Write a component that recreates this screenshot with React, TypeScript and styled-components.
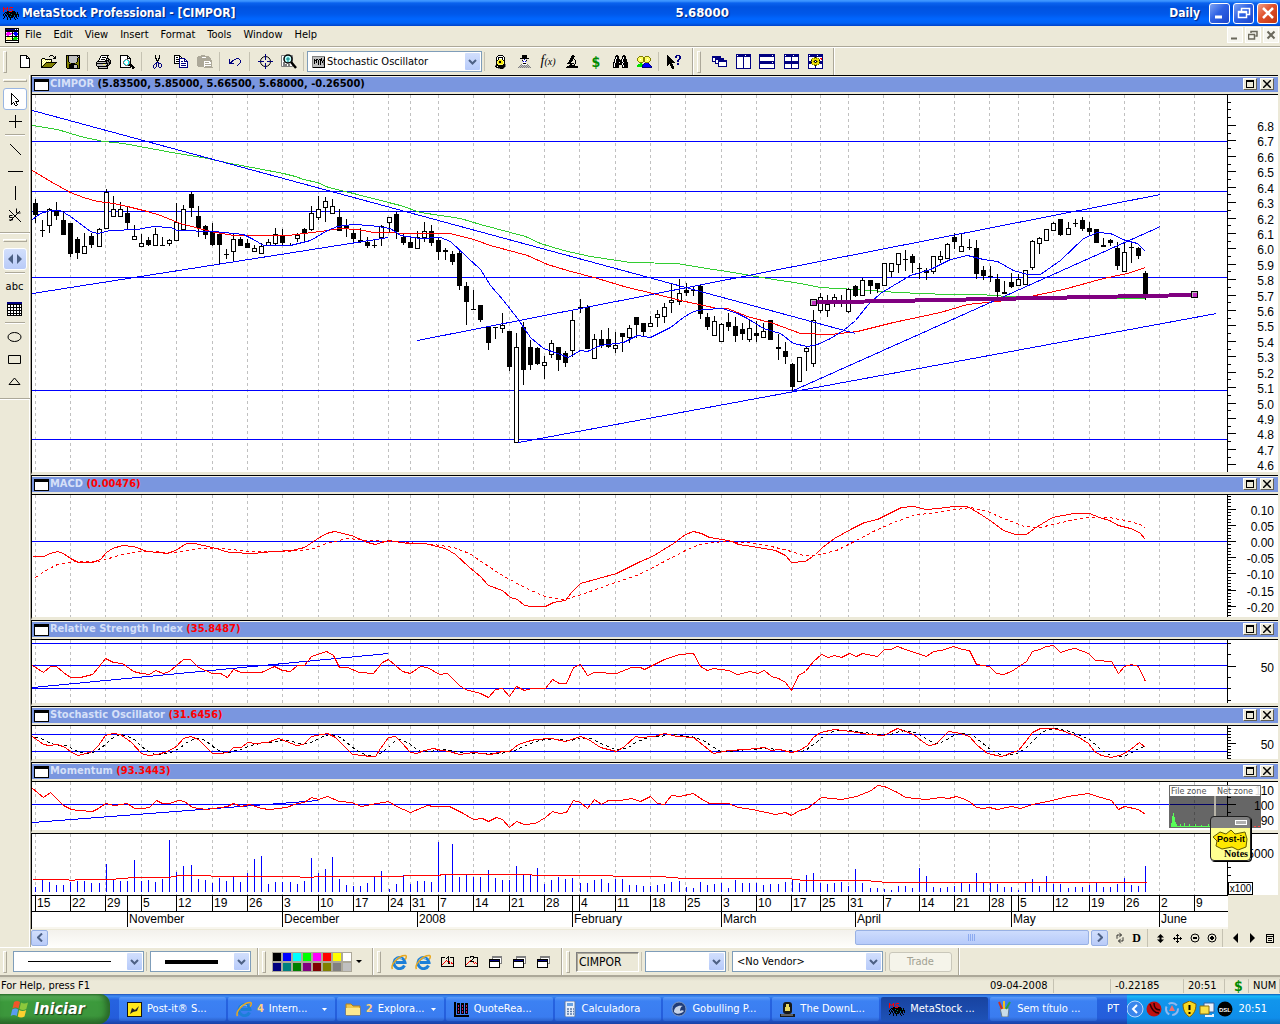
import React from 'react';
import styled, { createGlobalStyle, css } from 'styled-components';

/* ---------- theme values ---------- */
const face = '#ece9d8';
const shade = '#aca899';
const ui = '"DejaVu Sans Condensed", "Noto Sans", sans-serif';
const chartFont = '"Liberation Sans", Arial, sans-serif';

const Global = createGlobalStyle`
  *, *::before, *::after { box-sizing: border-box; }
  body { margin: 0; background: ${face}; font: 11px/14px ${ui}; color: #000; }
  button, select, input { font: inherit; color: inherit; margin: 0; padding: 0; border: 0; background: none; border-radius: 0; }
  svg { display: block; flex: none; }
`;

/* ---------- pixel sprites ---------- */
const palette: Record<string, string> = {
  k: '#000000', w: '#ffffff', b: '#000080', y: '#ffff66', o: '#808000', g: '#808080', s: '#c0c0c0',
  r: '#ff0000', B: '#0000ff', G: '#008000', L: '#00e000', c: '#00ffff', m: '#ff00ff', t: '#008080', d: '#aca899', Y: '#f0e000',
};

function Sprite({ rows }: { rows: string[] }) {
  const width = Math.max(...rows.map((r) => r.length));
  const runs: React.ReactNode[] = [];
  rows.forEach((row, y) => {
    let x = 0;
    while (x < row.length) {
      const ch = row[x];
      let end = x + 1;
      while (end < row.length && row[end] === ch) end += 1;
      if (palette[ch]) runs.push(<rect key={`${x}-${y}`} x={x} y={y} width={end - x} height={1} fill={palette[ch]} />);
      x = end;
    }
  });
  return (
    <svg width={width} height={rows.length} viewBox={`0 0 ${width} ${rows.length}`} shapeRendering="crispEdges" aria-hidden="true">
      {runs}
    </svg>
  );
}

const repeat = (row: string, n: number) => Array.from({ length: n }, () => row);

const art = {
  fresh: ['kkkkkkk...', 'kwwwwwkk..', 'kwwwwwkwk.', 'kwwwwwkkkk', ...repeat('kwwwwwwwwk', 8), 'kkkkkkkkkk'],
  open: ['.........kkk....', '........k...k.k.', '.............kk.', '.kkk........kkk.', 'kywykkkkkkk.....', 'kwywywywywk.....',
    'kywywywywyk.....', 'kwywykkkkkkkkkkk', 'kywykoooooooook.', 'kwykoooooooook..', 'kykoooooooook...', 'kkoooooooook....', 'kkkkkkkkkkk.....'],
  save: ['kkkkkkkkkkkkkk', 'kokssssssssksk', 'kokssssssssskk', ...repeat('kokssssssssкok'.normalize().replace(/[^a-z]/g, 'k'), 4), 'kooksssssskook', 'kooookkkkooook', 'kookkkkkkkkook',
    'kookkkkkssskok', 'kookkkkkssskok', 'kookkkkkssskok', '.kkkkkkkkkkkkk'],
  print: ['.....kkkkkkkk..', '....kwwwwwwk...', '....kwkkkkwk...', '...kwwwwwwkkk..', '...kwkkkkwk.kk.', '..kwwwwwwkkkkgk', '.kkkkkkkkkkgkgk',
    'kssssssssskggkk', 'kkkkkkkkkkkkgkk', 'kssssssyysskgk.', 'kssssssssskkk..', '.kkkkkkkkkkk...', '..kssssssssk...', '..kkkkkkkkkk...'],
  preview: ['kkkkkkkk.......', 'kwwwwwwkk......', 'kwwwwwwkwk.....', 'kwwwwwwkkkk....', 'kwwwwgggwwk....', 'kwwwgcwcgwk....', 'kwwgcwwwcgk....',
    'kwwgwwwwcgk....', 'kwwgcwwwcgk....', 'kwwwgcwcgkkk...', 'kwwwwgggkkkkk..', 'kwwwwwwwwwkkkk.', 'kkkkkkkkkkk.kkk', '............kk.'],
  cut: ['..k...k..', '..k...k..', '..k...k..', '..kk.kk..', '...k.k...', '...kkk...', '....k....', '...bbb...', '..bb.bbb.', '.b.b.b..b', 'b..b.b..b', 'b..b.b..b', 'b.b...bb.', '.b.......'],
  copy: ['kkkkkk.........', 'kwwwwkk........', 'kwkkwkwk.......', 'kwwwwbbbbbb....', 'kwkkkbwwwwbb...', 'kwwwwbwwwwbwb..', 'kwkkkbwbbwbbbb.',
    'kwwwwbwwwwwwwb.', 'kkkkkbwbbbbbwb.', '.....bwwwwwwwb.', '.....bwbbbbbwb.', '.....bwwwwwwwb.', '.....bbbbbbbbb.'],
  paste: ['....dddd.......', '.ddddddddddd...', 'dddddwwwwdddd..', 'dddddddddddddd.', 'dddddddddddddd.', 'ddddddddddddddd', 'dddddddwwwwwwdd', 'dddddddwddddwwd',
    'dddddddwwwwwwwd', 'dddddddwddddddd', 'dddddddwwwwwwwd', '.ddddddwddddddd', '.......ddddddddd'],
  undo: ['.......bbb..', 'b....bb...b.', 'b..bb......b', 'b.bb.......b', 'bbb........b', 'bbbbb.....b.', '.........b..', '........b...'],
  lock: ['....kkkkk...', '...kwwwwwk..', '..kwkkkkkwk.', '..kwkwwwkwk.', '..kwkyyykwk.', '..kkyYYYykk.', '..kyYkkYYyk.', '..kyYkkYYyk.', '..kyYYYYYyk.', '..kkyyyyykkg', '.gkkkkkkkkkg', '.kkwkkkkkkkg', '..kkkkkkkkg.', '....ggkkkg..'],
  man: ['....kkkkk....', '....kkkkk....', '....kkkkk....', '..kkkkkkkkk..', '....swbws....', '....kwwwk....', '....sBwBs....', '.....www.....', '.....kkk.....', '...gwwwwwg...', '..gsgsgsgsg..', '.gsgsgsgsgsg.', 'gsgsgsgsgsgsg'],
  scope: ['......kk....', '.....kkkk...', '.....kkk....', '....kkkk....', '....kkk.k...', '...kkkk..k..', '...kkk...k..', '..kkk....k..', '.kkkkkkk.k..', '....kk..k...', '...kkkkkk...', '.kkkkkkkkkkk', 'kkkkkkkkkkkk'],
  bino: ['...kk.....kk...', '..kkkk...kkkk..', '..kwkk...kwkk..', '..kwkk...kwkk..', '.kwkkkk.kwkkkk.', '.kwkkkkkkwkkkk.', '.kwkkkkkkwkkkk.', 'kkwkkkwkkkwkkkk', 'kwkkkkkkkwkkkkk', 'kwkkkkkkkwkkkkk', 'kwkkkk...kwkkkk', 'kwkkkk...kwkkkk', 'kkkkkk...kkkkkk'],
  people: ['..oooo..oooo...', '.oyyyyooyyyyo..', 'oyyyyyooyyyyyo.', 'oyywyyooyywyyo.', 'oyyyyyooyyyyyo.', '.oyyyyooyyyyo..', '..oooo..oooo...', '...LL..bBBBb...', '.LLLLLbBBBBBb..', 'LLLLLbBBBBBBBb.', 'LLLLLbBBBBBBBBb', '.....bbbbbbbbbb'],
  help: ['k........bbbb..', 'kk......bb..bb.', 'kkk.....bb..bb.', 'kkkk........bb.', 'kkkkk......bb..', 'kkkkkk....bb...', 'kkkkkkk...bb...', 'kkkkkkkk.......', 'kkkkk.....bb...', 'kk.kkk....bb...', 'k..kkk.........', '....kkk........', '....kkk........', '.....kk........'],
  arrow: ['k.......', 'kk......', 'kwk.....', 'kwwk....', 'kwwwk...', 'kwwwwk..', 'kwwwwwk.', 'kwwwwwwk', 'kwwwkkkk', 'kwkwwk..', 'kk.kwk..', 'k..kwwk.', '....kk..'],
  tile: ['bbbbbbbbb......', 'bbbbbbbbb......', 'bwwbbbbbbbbb...', 'bwwbbbbbbbbb...', 'bwwbwwbbbbbbbbb', 'bbbbwwbbbbbbbbb', '...bwwbwwwwwwwb', '...bbbbwwwwwwwb', '......bwwwwwwwb', '......bwwwwwwwb', '......bbbbbbbbb'],
  cols: ['bbbbbbbbbbbbbbb', 'bwbbbbbbbwbbbbb', 'bbbbbbbbbbbbbbb', ...repeat('bwwwwwwbwwwwwwb', 11), 'bbbbbbbbbbbbbbb'],
  rows: ['bbbbbbbbbbbbbbbb', 'bbbbbbbbbbbbbwbb', 'bbbbbbbbbbbbbbbb', ...repeat('bwwwwwwwwwwwwwwb', 4), 'bbbbbbbbbbbbbbbb', 'bbbbbbbbbbbbbwbb', 'bbbbbbbbbbbbbbbb', ...repeat('bwwwwwwwwwwwwwwb', 4), 'bbbbbbbbbbbbbbbb'],
  quad: ['bbbbbbbbbbbbbbb', 'bwbbbbbbbwbbbbb', 'bbbbbbbbbbbbbbb', ...repeat('bwwwwwwbwwwwwwb', 4), 'bbbbbbbbbbbbbbb', 'bbbbbbbbbbbbbbb', 'bbbbbbbbbbbbbbb', ...repeat('bwwwwwwbwwwwwwb', 4), 'bbbbbbbbbbbbbbb'],
  quadGear: ['bbbbbbbbbbbbbbb', 'bwbbbbbbbwbbbbb', 'bbbbbbbbbbbbbbb', 'bwwwwwokowwwwwb', 'bwwwoYoYoYowrrb', 'bwwoYYYYYYYowrb', 'bwwkYYokoYYkwwb', 'bbboYokwkoYobbb', 'bbbkYYokoYYkbbb', 'bbboYYYYYYYobbb', 'bwwwoYoYoYowwwb', 'bwwwwwokowwwwwb', 'bwwwwwwbwwwwwwb', 'bwwwwwwbwwwwwwb', 'bbbbbbbbbbbbbbb'],
  windows: ['...gggggggggg', '...gggggggggg', '...gwwwwwwwwg', 'kkkkkkkkkkkwg', 'kbbbbbbbbbkwg', 'kkkkkkkkkkkwg', 'kwwwwwwwwwkwg', 'kwwwwwwwwwkgg', 'kwwwwwwwwwk..', 'kwwwwwwwwwk..', 'kwwwwwwwwwk..', 'kkkkkkkkkkk..'],
  bug: ['r...r..rrr......', 'rr.rr.r.........', 'r.r.r..rr.......', 'r...r....r......', 'r...kkrrrkkk....', '..kkkkkkkkkkk.k.', '.k.kkktkkkkkktk.', 'k.k.kkkktkkkkkkk', 'k.kk.kkkkkktkk.k', '.k.k.kktkkk.kk.k', '.k..k.kkkk.k.k..', 'k...k..k...k..k.', '....k..k....k...'],
  doc: ['kkkkkkkkkkkkkk', 'kbbbbbbbbbwbwk', 'kkkkkkkkkkkkkk', 'kkkkkkkkkkkkkk', 'kwmmmwwkwBBBwk', 'kmmmmmmkBBBBBk', 'kmmmmmwkwBBBBk', 'kwmmwwwkwwBBwk', 'kkkkkkkkkkkkkk', 'kwyyywwkwLLLwk', 'kyyyyyykLLLLLk', 'kwyyyywkLLLLwk', 'kkkkkkkkkkkkkk', 'kwwwwwwwwwwwwk', 'kkkkkkkkkkkkkk'],
  one: ['.......k.....', 'kkkk..kk.kkkk', 'k....k.k....k', 'k......k....k', 'k....r.k....k', 'k...r.rkr...k', 'k..r...kr.r.k', 'k.r....kk.rrk', 'kr..........k', 'k...........k', 'kkkkkkkkkkkkk'],
  two: ['.....kkkk....', 'kkkk.k..kkkkk', 'k.......k...k', 'k......k....k', 'k....rk.....k', 'k...rkkkk...k', 'k..r....r.r.k', 'k.r......r.rk', 'kr..........k', 'k...........k', 'kkkkkkkkkkkkk'],
  table: ['bbbbbbbbbbbbbbb', 'bbbbbbbbbbbbbbb', 'kkkkkkkkkkkkkkk', 'kwwkwwkwwkwwkwk', 'kwwkwwkwwkwwkwk', 'kkkkkkkkkkkkkkk', 'kwwkwwkwwkwwkwk', 'kwwkwwkwwkwwkwk', 'kkkkkkkkkkkkkkk', 'kwwkwwkwwkwwkwk', 'kwwkwwkwwkwwkwk', 'kkkkkkkkkkkkkkk', 'kwwkwwkwwkwwkwk', 'kkkkkkkkkkkkkkk'],
  hist: ['ggggggggggggg', 'gsssssssssssk', 'gsssssssskssk', 'gskskkskkksgk', 'gskkkskskkskk', 'gskskskskskgk', 'gskskskskskgk', 'gskssskskssgk', 'gssssskskssgk', 'gsssssssssssk', 'gsssssssssssk', 'gkkkkkkkkkkkk'],
};

/* ---------- window chrome ---------- */
const Window = styled.div`
  display: flex;
  flex-direction: column;
  min-width: 1100px;
`;

const TitleBar = styled.header`
  display: flex;
  align-items: center;
  height: 26px;
  padding: 0 2px 0 3px;
  color: #fff;
  font: bold 12px/18px ${ui};
  text-shadow: 1px 1px 1px #00207a;
  background: linear-gradient(#3d95ff 0, #3d95ff 1px, #0a62ee 3px, #0052e0 7px, #0058ea 14px, #0066ff 19px, #0062f6 23px, #0042c8 26px);
`;

const TitleHalf = styled.div`
  display: flex;
  flex: 1 1 0;
  align-items: center;
  gap: 3px;
  white-space: nowrap;
`;

const Price = styled.span`
  flex: 1;
  padding-left: 35px;
  font-size: 13px;
`;

const Period = styled.span`
  padding-right: 6px;
`;

const CaptionButton = styled.button<{ $tone: string }>`
  display: grid;
  place-items: center;
  width: 21px;
  height: 21px;
  border: 1px solid #fff;
  border-radius: 3px;
  background: ${(p) => (p.$tone === 'close' ? 'linear-gradient(135deg, #f0a088, #e0502a 45%, #c03410)' : 'linear-gradient(135deg, #7fa4f4, #2f62e4 45%, #1c46cc)')};
`;

const MenuBar = styled.nav`
  display: flex;
  align-items: center;
  height: 21px;
  padding: 0 1px 2px 5px;
  border-bottom: 1px solid ${shade};
  line-height: 14px;
`;

const MenuItem = styled.button`
  height: 18px;
  padding: 0 6px;
`;

const Spacer = styled.div`
  flex: 1;
`;

const ChildButton = styled.button`
  display: grid;
  place-items: center;
  width: 16px;
  height: 16px;
  margin-left: 2px;
  background: #f6f5ee;
  border: 1px solid #fff;
`;

const ToolBar = styled.div`
  display: flex;
  align-items: center;
  height: 28px;
  padding: 0 0 0 3px;
  border-top: 1px solid #fff;
`;

const Grip = styled.div`
  width: 4px;
  height: 22px;
  margin-right: 6px;
  border: 1px solid;
  border-color: #fff ${shade} ${shade} #fff;
`;

const ToolButton = styled.button<{ $w?: number }>`
  display: grid;
  place-items: center;
  width: ${(p) => p.$w ?? 24}px;
  height: 22px;
`;

const Divider = styled.div<{ $gap?: number }>`
  width: 1px;
  height: 19px;
  margin: 0 ${(p) => (p.$gap ?? 5) - 2}px 0 2px;
  background: #c5c2b2;
`;

const BandEnd = styled.div`
  width: 2px;
  align-self: stretch;
  margin: 0 3px 0 6px;
  border-left: 1px solid ${shade};
  border-right: 1px solid #fff;
`;

const Combo = styled.label<{ $w: number }>`
  position: relative;
  display: flex;
  align-items: center;
  gap: 2px;
  width: ${(p) => p.$w}px;
  height: 21px;
  padding-left: 4px;
  border: 1px solid #7f9db9;
  background: #fff;
`;

const ComboSelect = styled.select<{ $line?: number }>`
  appearance: none;
  flex: 1;
  min-width: 0;
  height: 19px;
  padding-right: 18px;
  outline: none;
  ${(p) =>
    p.$line &&
    css`
      background: linear-gradient(#000, #000) 10px center / calc(100% - 42px) ${p.$line}px no-repeat;
    `}
`;

const ComboArrow = styled.span`
  position: absolute;
  top: 1px;
  right: 1px;
  bottom: 1px;
  display: grid;
  place-items: center;
  width: 15px;
  border-radius: 1px;
  background: linear-gradient(#d2dffc, #b6cafa);
  pointer-events: none;
`;

const Chevron = () => (
  <svg width="9" height="6" viewBox="0 0 9 6" aria-hidden="true">
    <path d="M1 1l3.500 3.500L8 1" fill="none" stroke="#4d6185" strokeWidth="2" />
  </svg>
);

function ComboBox({ label, width, value, line, icon }: { label: string; width: number; value?: string; line?: number; icon?: React.ReactNode }) {
  return (
    <Combo $w={width}>
      {icon}
      <ComboSelect aria-label={label} $line={line} defaultValue={value ?? ''}>
        <option>{value ?? ''}</option>
      </ComboSelect>
      <ComboArrow>
        <Chevron />
      </ComboArrow>
    </Combo>
  );
}

const FuncMark = styled.span`
  font: italic 14px/16px "Liberation Serif", serif;
  small { font-size: 10px; }
`;

const Dollar = styled.span`
  color: #008a00;
  font: bold 14px/14px ${ui};
`;

/* ---------- work area ---------- */
const Work = styled.main`
  display: flex;
`;

const SideBar = styled.aside`
  width: 30px;
  border-right: 1px solid #fff;
  display: flex;
  flex-direction: column;
  align-items: center;
`;

const SideGrip = styled.div`
  width: 24px;
  height: 3px;
  margin: 4px 0 6px;
  border: 1px solid;
  border-color: #fff ${shade} ${shade} #fff;
`;

const SideButton = styled.button<{ $state?: 'on' | 'hot' }>`
  display: grid;
  place-items: center;
  width: 24px;
  height: 22px;
  border-radius: 3px;
  ${(p) => p.$state === 'on' && css`background: #fff; border: 1px solid #98b5e2;`}
  ${(p) => p.$state === 'hot' && css`background: linear-gradient(#d2dffc, #b9cbf8); border: 1px solid #fff;`}
`;

const SideLine = styled.hr<{ $wide?: boolean }>`
  width: ${(p) => (p.$wide ? 30 : 20)}px;
  height: 2px;
  margin: ${(p) => (p.$wide ? '6px 0 1px' : '2px 0')};
  border: 0;
  border-top: 1px solid ${shade};
  border-bottom: 1px solid #fff;
`;

const Charts = styled.section`
  flex: 1;
  min-width: 0;
  border-left: 1px solid ${shade};
  padding-right: 2px;
`;

const Panel = styled.article`
  position: relative;
  border-left: 1px solid #000;
  border-bottom: 3px solid ${face};
`;

const BarePanel = styled.div<{ $ruled?: boolean }>`
  position: relative;
  border-left: 1px solid #000;
  border-top: ${(p) => (p.$ruled ? '1px solid #000' : '0')};
`;

const PanelHead = styled.header`
  display: flex;
  align-items: center;
  height: 20px;
  padding: 0 1px 3px 2px;
  border: solid #000;
  border-width: 1px 0;
  background: linear-gradient(#f4f2e6 0, #f4f2e6 1px, #7a96df 1px, #7a96df 16px, ${face} 16px);
  font: bold 11px/14px ${ui};
`;

const WindowGlyph = styled.span`
  width: 15px;
  height: 12px;
  margin: 3px 1px 0 0;
  border: 1px solid #000;
  border-top-width: 3px;
  background: #fff;
`;

const PanelName = styled.h2<{ $tone: string }>`
  flex: 1;
  margin: 0;
  font: inherit;
  color: #d6e0f8;
  b { color: ${(p) => p.$tone}; }
`;

const PanelButton = styled.button`
  display: grid;
  place-items: center;
  width: 14px;
  height: 12px;
  margin-right: 3px;
  background: ${face};
  border: 1px solid;
  border-color: #fff #605e54 #605e54 #fff;
`;

const Row = styled.div`
  display: flex;
`;

const PlotBox = styled.div`
  flex: 1;
  min-width: 0;
  background: #fff;
`;

const AxisBox = styled.div`
  width: 51px;
  background: #fff;
`;

/* ---------- chart data, in canvas coordinates ---------- */
const LEFT = 32;
const RIGHT = 1227;
const barX = (i: number) => Math.round(34.9 + i * 7.073);

type Mark = [number, string];
const weeks: Mark[] = [
  [35, '15'], [70, '22'], [105, '29'], [141, '5'], [176, '12'], [212, '19'], [247, '26'], [282, '3'], [318, '10'], [353, '17'], [388, '24'], [410, '31'],
  [438, '7'], [473, '14'], [509, '21'], [544, '28'], [579, '4'], [615, '11'], [650, '18'], [685, '25'], [721, '3'], [756, '10'], [791, '17'], [820, '25'],
  [848, '31'], [883, '7'], [919, '14'], [954, '21'], [989, '28'], [1018, '5'], [1053, '12'], [1089, '19'], [1124, '26'], [1159, '2'], [1194, '9'],
];
const monthTicks: Mark[] = [[127, ''], [572, ''], [1011, '']];
const months: Mark[] = [
  [127, 'November'], [282, 'December'], [417, '2008'], [572, 'February'], [721, 'March'], [855, 'April'], [1011, 'May'], [1159, 'June'],
];

/* hollow flag (1 = rising bar), then high, body top, body bottom, low */
const candles = `0 199 203 215 223|0 220 230 230 237|1 208 209 225 233|0 202 210 216 220|0 211 220 235 235|0 223 223 254 257|0 237 239 253 259|1 233 246 253 253|0 233 236 245 248|1 228 229 246 246
|1 189 192 228 228|1 196 209 216 216|1 202 209 216 216|0 206 213 223 230|1 225 236 239 239|1 234 243 246 246|0 237 240 245 246|1 228 234 245 245|0 237 245 245 245|1 239 240 243 246
|1 203 222 240 240|1 205 209 229 229|0 192 194 208 217|0 206 216 228 237|0 225 226 235 239|0 223 232 245 246|0 233 234 245 265|0 249 254 255 259|1 234 239 251 261|0 237 239 246 246
|0 239 243 248 248|1 245 248 251 251|1 243 246 253 253|1 239 242 245 245|1 228 234 243 245|0 229 236 243 246|0 243 245 245 245|1 233 235 238 242|0 228 229 233 242|1 206 213 229 231
|1 196 209 217 220|1 197 201 207 222|1 199 206 213 213|0 209 217 231 231|0 219 225 228 237|0 229 233 239 243|0 228 240 242 243|0 237 242 246 248|0 239 245 246 248|1 225 226 237 246
|1 217 217 222 233|0 212 214 232 239|0 234 237 243 245|0 237 242 248 248|1 231 237 248 248|1 222 231 237 242|0 225 231 243 246|0 238 240 252 260|0 248 250 252 260|0 251 254 262 265
|0 251 253 286 290|0 282 286 302 325|0 290 309 309 309|0 305 305 320 322|0 326 327 343 350|0 327 327 327 339|1 313 325 328 333|0 331 331 367 371|1 333 347 442 442|0 322 327 370 385
|0 340 347 365 370|0 347 348 364 365|1 356 362 365 379|1 340 343 354 358|0 347 347 360 371|0 351 353 363 367|1 310 320 350 357|0 299 307 308 313|0 305 307 349 349|1 334 339 358 358
|0 330 339 345 348|0 328 339 347 348|1 332 345 348 353|0 333 333 337 352|1 325 328 337 343|0 317 317 325 338|0 323 323 332 337|1 316 323 326 327|1 310 314 317 327|1 303 307 316 323
|1 283 300 302 313|1 279 293 301 305|0 283 290 293 296|0 287 290 291 296|0 285 286 314 319|0 313 317 327 330|1 316 321 335 335|1 323 324 341 341|0 313 322 327 331|0 317 326 336 342
|0 323 329 334 340|1 320 328 339 342|0 321 333 336 342|1 323 331 337 337|0 320 320 340 340|0 334 347 349 360|0 342 351 357 364|0 363 364 387 392|1 357 357 381 381|1 347 348 351 371
|1 310 320 363 367|1 293 297 310 313|1 295 304 310 317|1 294 297 302 307|0 295 302 302 307|1 288 289 311 313|0 285 286 296 297|1 278 280 295 295|0 280 280 286 294|0 283 283 289 293
|1 263 263 285 285|1 263 263 271 277|1 253 253 264 273|0 250 259 260 271|0 254 256 263 273|0 263 268 268 279|0 268 270 273 280|1 256 256 271 274|1 251 256 259 263|1 243 244 258 259
|0 233 237 242 249|1 234 246 251 251|0 239 247 247 250|0 240 248 274 279|0 266 270 276 280|0 266 276 276 282|0 274 279 292 298|0 281 292 294 294|0 273 282 287 288|1 274 279 285 286
|1 270 270 284 284|1 240 241 267 270|1 237 238 243 254|1 229 229 240 240|1 222 223 230 231|0 219 219 235 236|1 222 228 234 234|0 219 223 224 227|0 217 220 229 231|0 222 228 232 235
|0 229 229 243 243|0 238 245 247 247|0 239 240 243 246|0 242 248 266 270|1 242 252 271 271|0 242 247 247 263|0 247 248 256 259|0 271 273 295 300`
  .split('|')
  .map((bar) => bar.trim().split(' ').map(Number));

const greenMA = '32,125 57,129 80,136 103,141 123,143 150,148 177,153 207,158 230,163 257,168 283,173 295,176 303,179 317,182 328,187 353,193 388,202 400,205 420,212 440,215 460,218 480,224 510,232 525,236 540,243 563,250 590,256 630,262 677,263 700,267 733,272 767,278 800,283 820,287 855,289 897,292 947,294 980,294 1007,296 1050,298 1114,298 1145,298';
const redMA = '32,170 50,181 70,192 83,197 97,201 113,203 127,206 147,211 160,215 180,223 210,231 233,235 287,235 320,231 340,228 357,229 373,232 420,233 450,233 473,239 490,245 527,255 547,264 567,270 597,278 627,287 653,293 680,300 717,308 727,308 747,316 773,323 800,333 830,334 857,331 893,322 940,312 967,304 997,301 1030,296 1063,289 1103,278 1127,273 1145,267';
const blueMA = '32,219 40,213 50,210 60,210 70,216 90,231 97,233 110,230 137,229 153,226 170,227 177,230 213,231 243,234 253,239 263,245 290,245 310,240 327,230 337,226 353,224 370,225 390,228 400,235 420,238 440,237 450,241 467,257 480,269 490,285 503,300 517,318 530,337 543,348 560,354 568,357 580,350 587,351 600,345 623,342 637,335 650,337 670,327 683,317 693,311 703,309 722,308 737,313 747,318 763,328 780,333 793,343 807,346 817,344 830,338 843,330 855,320 867,305 880,293 893,285 910,275 930,269 950,259 967,255 983,259 997,261 1013,270 1027,274 1040,274 1060,260 1083,238 1097,232 1110,233 1125,240 1137,243 1145,251';
const macd = '32,556 43,556 50,553 57,551 63,553 70,558 78,562 92,562 100,559 106,552 112,548 122,545 133,546 147,551 167,553 175,550 186,543 194,543 212,547 229,552 253,553 273,551 292,550 304,547 316,539 326,533 334,531 351,535 367,542 375,544 388,540 408,543 424,543 445,548 455,554 469,567 480,576 488,585 502,590 510,597 517,599 524,605 531,606 545,606 553,602 565,600 571,592 580,583 616,573 640,561 652,556 673,543 685,534 693,531 701,533 709,537 722,539 732,541 738,544 758,547 775,550 785,555 791,562 805,561 815,554 822,547 834,538 852,528 864,522 877,519 889,513 901,507 913,506 926,509 938,508 954,506 967,506 979,513 991,521 1003,530 1015,534 1026,534 1034,528 1042,523 1052,517 1073,513 1089,513 1099,517 1109,520 1118,525 1130,528 1139,532 1145,539';
const macdSignal = '35,577 47,569 57,564 73,561 98,561 122,554 141,551 175,552 200,548 222,548 249,551 286,551 310,549 326,543 347,538 367,540 392,541 433,544 453,547 469,553 482,562 502,575 526,588 547,597 565,599 584,593 612,583 639,574 664,561 685,550 699,544 722,541 746,542 771,546 791,551 803,555 815,555 836,550 852,542 873,531 893,522 913,515 942,511 970,507 987,511 1003,518 1024,526 1040,527 1056,523 1085,517 1109,517 1130,521 1142,525 1145,528';
const rsi = '32,665 43,672 50,666 56,666 63,672 70,677 80,677 92,674 98,667 105,658 113,662 122,663 133,671 141,673 149,674 155,670 163,673 169,671 176,665 183,659 190,659 198,667 212,673 220,673 227,677 233,669 241,672 261,672 274,666 282,670 290,671 297,665 304,665 311,656 326,651 333,655 339,667 347,667 359,672 373,673 382,662 388,659 402,671 410,673 420,666 427,667 439,674 447,673 459,685 465,689 480,693 488,697 495,689 502,688 509,696 516,686 524,690 531,688 545,688 552,679 559,683 566,683 573,667 580,664 587,675 594,672 616,673 631,667 640,667 644,669 664,659 679,654 693,653 700,666 707,670 713,668 728,670 737,674 750,671 757,673 764,670 771,676 778,678 785,682 791,690 798,675 805,671 813,661 821,654 828,657 834,655 841,657 849,653 856,656 862,653 877,656 884,649 890,649 897,646 905,649 926,656 933,651 941,650 953,646 962,649 969,650 976,664 989,666 996,673 1003,674 1011,671 1026,661 1032,651 1039,649 1046,646 1053,645 1060,652 1069,649 1075,648 1088,653 1095,660 1111,661 1118,673 1124,666 1131,664 1138,666 1145,681';
const stoch = '32,736 43,744 49,745 57,744 65,747 71,752 78,755 92,751 98,745 105,735 112,733 120,734 131,742 141,753 148,755 157,754 167,751 176,746 183,738 190,736 198,739 206,747 212,753 222,753 229,751 233,747 241,747 247,742 255,743 267,742 278,738 286,741 296,745 303,744 311,736 327,733 335,737 345,747 352,754 363,755 369,756 375,756 380,748 388,737 395,736 402,743 410,752 416,753 424,750 433,748 441,750 449,751 459,754 473,752 490,754 502,751 509,751 518,744 527,741 535,739 551,738 565,741 580,736 588,739 600,747 616,751 624,746 635,736 640,737 654,736 664,733 677,736 693,737 703,745 713,753 728,750 746,749 764,747 771,750 779,749 791,752 799,750 807,745 813,737 820,732 834,729 850,731 869,734 884,735 891,731 897,728 905,731 913,734 922,741 928,745 935,744 942,737 948,731 960,733 969,736 977,745 987,753 1001,756 1018,750 1026,740 1032,732 1040,728 1053,728 1064,731 1077,736 1088,743 1094,751 1101,755 1111,757 1122,754 1130,749 1139,742 1145,747';
const momentum = '32,788 43,797 50,792 63,805 71,809 78,810 92,811 98,808 105,803 114,805 127,803 134,808 143,808 149,807 156,800 162,803 169,803 178,800 184,801 192,807 206,809 227,806 233,803 241,806 249,804 261,808 269,809 286,807 297,803 304,802 311,797 318,799 327,796 339,801 351,802 361,806 371,804 388,801 396,806 410,812 427,805 433,806 449,806 461,812 473,819 482,818 488,821 496,817 502,819 509,827 516,821 524,824 535,823 545,817 552,811 559,813 566,812 573,800 580,802 587,808 594,799 601,804 608,800 620,800 631,798 640,801 650,796 657,803 664,804 671,795 679,796 693,793 700,798 709,803 728,803 738,807 752,809 775,814 785,812 791,815 799,810 807,808 821,797 841,799 856,796 871,790 877,785 884,786 897,792 905,797 926,799 940,797 948,798 956,796 962,798 969,801 976,807 983,808 989,807 997,809 1011,806 1020,808 1032,804 1052,800 1067,796 1088,793 1097,796 1111,800 1118,809 1124,806 1138,809 1145,814';
const volumeMA = '32,879 67,879 70,880 80,879 110,879 133,877 167,877 180,875 208,875 213,876 295,876 303,877 310,877 317,876 400,876 407,875 437,875 443,874 520,874 543,875 610,875 615,876 660,876 683,878 788,878 803,880 865,880 887,882 1146,882';
const volume = [
  5, 12, 10, 7, 7, 10, 11, 11, 9, 9, 28, 12, 11, 11, 32, 11, 12, 10, 13, 52, 20, 26, 27, 13, 12, 9, 14, 11, 15, 10, 19, 33, 36, 8, 10, 10, 10, 8, 11, 34, 19, 23, 35, 13, 7, 6, 6, 9, 15, 21, 3, 8, 17, 8, 11, 11, 10,
  50, 17, 48, 15, 18, 15, 15, 22, 14, 12, 12, 26, 18, 17, 24, 8, 12, 15, 13, 14, 9, 9, 12, 13, 9, 13, 13, 7, 7, 6, 6, 7, 8, 10, 11, 5, 4, 10, 7, 8, 9, 4, 12, 9, 9, 9, 7, 8, 8, 10, 12, 9, 17, 19, 9, 8, 9,
  10, 6, 23, 9, 4, 4, 3, 2, 6, 6, 4, 24, 16, 5, 4, 5, 6, 9, 8, 19, 9, 9, 8, 5, 5, 2, 9, 13, 6, 16, 8, 8, 4, 5, 5, 7, 9, 5, 5, 8, 14, 7, 6, 26,
];

/* Three-bar moving average of a polyline, resampled every five units. */
function average(line: string) {
  const pts = line.split(' ').map((p) => p.split(',').map(Number));
  const at = (x: number) => {
    const k = Math.max(1, pts.findIndex((p) => p[0] >= x));
    const [a, b] = [pts[k - 1], pts[k]];
    return a[1] + ((b[1] - a[1]) * (x - a[0])) / (b[0] - a[0]);
  };
  const out: string[] = [];
  for (let x = 35; x <= 1145; x += 5) {
    const mean = [0, 7, 14].reduce((sum, back) => sum + at(Math.max(32, x - back)), 0) / 3;
    out.push(`${x},${Math.round(mean)}`);
  }
  return out.join(' ');
}

const Line = ({ points, color, dash }: { points: string; color: string; dash?: string }) => (
  <polyline points={points} fill="none" stroke={color} strokeDasharray={dash} transform="translate(0.5 0.5)" />
);

const Level = ({ y }: { y: number }) => <rect x={LEFT} y={y} width={RIGHT - LEFT} height={1} fill="#0000ff" />;

function Plot({ top, height, label, children }: { top: number; height: number; label: string; children: React.ReactNode }) {
  return (
    <PlotBox>
      <svg width="100%" height={height} viewBox={`${LEFT} ${top} ${RIGHT - LEFT} ${height}`} preserveAspectRatio="none" shapeRendering="crispEdges" role="img" aria-label={label}>
        {weeks.map(([x]) => (
          <line key={x} x1={x + 0.5} x2={x + 0.5} y1={top} y2={top + height} stroke="#c0c0c0" strokeDasharray="3 3" />
        ))}
        {children}
      </svg>
    </PlotBox>
  );
}

function Axis({ top, height, labels, minor }: { top: number; height: number; labels: [number, string][]; minor: number[] }) {
  return (
    <AxisBox>
      <svg width="51" height={height} viewBox={`1227 ${top} 51 ${height}`} shapeRendering="crispEdges">
        <rect x={1227} y={top} width={1} height={height} fill="#000" />
        {minor.map((y) => (
          <rect key={y} x={1228} y={Math.round(y)} width={3} height={1} fill="#000" />
        ))}
        {labels.map(([y, text]) => (
          <g key={text}>
            <rect x={1228} y={Math.round(y)} width={8} height={1} fill="#000" />
            <text x={1274} y={Math.round(y) + 6} textAnchor="end" fontFamily="Liberation Sans, Arial, sans-serif" fontSize="12">
              {text}
            </text>
          </g>
        ))}
      </svg>
    </AxisBox>
  );
}

function Head({ name, value, tone = '#ff0000' }: { name: string; value: string; tone?: string }) {
  return (
    <PanelHead>
      <WindowGlyph />
      <PanelName $tone={tone}>
        {name} <b>({value})</b>
      </PanelName>
      <PanelButton aria-label={`Maximize ${name}`}>
        <svg width="8" height="8" shapeRendering="crispEdges"><path d="M0 0h8v8H0zM1 2v5h6V2z" fillRule="evenodd" /></svg>
      </PanelButton>
      <PanelButton aria-label={`Close ${name}`}>
        <svg width="8" height="8"><path d="M0 0l8 8M8 0L0 8" stroke="#000" strokeWidth="1.500" /></svg>
      </PanelButton>
    </PanelHead>
  );
}

const series = (from: number, to: number, step: number) => {
  const out: number[] = [];
  for (let v = from; v <= to; v += step) out.push(v);
  return out;
};

const priceLabels: [number, string][] = Array.from({ length: 23 }, (_, k) => [125 + k * 15.42, (6.8 - k * 0.1).toFixed(1)]);
const macdLabels: [number, string][] = ['0.10', '0.05', '0.00', '-0.05', '-0.10', '-0.15', '-0.20'].map((t, k) => [509 + k * 16.1, t]);

const Handle = ({ x, y }: { x: number; y: number }) => (
  <g>
    <rect x={x - 3} y={y - 3} width={7} height={7} fill="#000" />
    <rect x={x - 2} y={y - 2} width={5} height={5} fill="#c0c0c0" />
    <rect x={x - 1} y={y - 1} width={4} height={4} fill="#c030c0" />
  </g>
);

const trend = (x1: number, y1: number, x2: number, y2: number) => <Line points={`${x1},${y1} ${x2},${y2}`} color="#0000ff" />;

function PriceMarks() {
  return (
    <>
      {[141, 191, 211, 277, 390, 439].map((y) => <Level key={y} y={y} />)}
      <Line points={greenMA} color="#32cd32" />
      {candles.map(([hollow, high, top, bottom, low], i) => {
        const x = barX(i);
        return (
          <g key={i}>
            <rect x={x} y={high} width={1} height={Math.max(1, low - high)} fill="#000" />
            <rect x={x - 2} y={top} width={5} height={Math.max(1, bottom - top + (hollow ? 1 : 0))} fill="#000" />
            {hollow === 1 && <rect x={x - 1} y={top + 1} width={3} height={Math.max(1, bottom - top - 1)} fill="#fff" />}
          </g>
        );
      })}
      <Line points={redMA} color="#ff0000" />
      <Line points={blueMA} color="#0000ff" />
      {trend(32, 110, 855, 333)}
      {trend(32, 293, 388, 237)}
      {trend(417, 340, 1160, 194)}
      {trend(518, 442, 1216, 313)}
      {trend(793, 390, 1160, 226)}
      <path d="M814 302.500L1194 295" stroke="#800080" strokeWidth="4" />
      <Handle x={813} y={302} />
      <Handle x={1194} y={294} />
    </>
  );
}

/* ---------- date scale ---------- */
const DateRow = styled.div`
  display: flex;
  height: 16px;
  border-top: 1px solid #000;
  background: #fff;
  font: 12px/15px ${chartFont};
`;

const DateCell = styled.span<{ $span: number; $tick?: boolean }>`
  flex: ${(p) => `${p.$span} ${p.$span} ${p.$span}px`};
  min-width: 0;
  height: 15px;
  padding-left: ${(p) => (p.$tick ? 1 : 0)}px;
  border-left: ${(p) => (p.$tick ? '1px solid #000' : '0')};
  white-space: nowrap;
`;

const DateScale = styled.div`
  flex: 1;
  min-width: 0;
  border-bottom: 2px solid #f8f6ee;
`;

const ScaleGap = styled.div`
  width: 50px;
`;

function Dates({ marks }: { marks: Mark[] }) {
  const sorted = [...marks].sort((a, b) => a[0] - b[0]);
  return (
    <DateRow>
      <DateCell $span={sorted[0][0] - LEFT} />
      {sorted.map(([x, text], k) => (
        <DateCell key={x} $tick $span={(sorted[k + 1]?.[0] ?? RIGHT + 1) - x}>{text}</DateCell>
      ))}
    </DateRow>
  );
}

const Multiplier = styled.span`
  position: absolute;
  right: 25px;
  bottom: 0;
  width: 25px;
  height: 13px;
  border: 1px solid #000;
  background: #fff;
  font: 10px/12px ${chartFont};
  text-align: center;
`;

/* ---------- floating gadgets ---------- */
const Zones = styled.div`
  position: absolute;
  top: 23px;
  right: 17px;
  z-index: 1;
  width: 92px;
  height: 43px;
  padding: 1px 7px 1px 1px;
  display: flex;
  justify-content: space-between;
  border: 1px solid #686868;
  background: linear-gradient(rgba(255, 255, 255, 0.85) 0 10px, rgba(0, 0, 0, 0.6) 10px);
  color: #505050;
  font: 9px/9px "DejaVu Sans Condensed", sans-serif;
  overflow: hidden;
  white-space: nowrap;
`;

const ZoneGraph = styled.svg`
  position: absolute;
  left: 0;
  bottom: 0;
`;

const PostIt = styled.div`
  position: absolute;
  top: 54px;
  right: 27px;
  z-index: 2;
  width: 41px;
  height: 45px;
  border: 1px solid #202020;
  border-radius: 4px;
  background: linear-gradient(#808080 0 11px, #ffff90 11px);
  box-shadow: 1px 1px 0 #000;
  text-align: center;
`;

const PostTab = styled.span`
  position: absolute;
  top: 3px;
  right: 3px;
  width: 12px;
  height: 5px;
  border: 1px solid #fff;
  background: #b0b0b0;
`;

const PostStar = styled.svg`
  position: absolute;
  top: 12px;
  left: 1px;
`;

const PostName = styled.b`
  position: absolute;
  top: 18px;
  left: 6px;
  font: bold 9px/9px "Liberation Sans", sans-serif;
`;

const PostNotes = styled.b`
  position: absolute;
  right: 2px;
  bottom: 0;
  font: bold 10px/12px "Liberation Serif", serif;
`;

/* ---------- scroll row ---------- */
const ScrollRow = styled.div`
  display: flex;
  align-items: center;
  height: 18px;
`;

const Track = styled.div`
  display: flex;
  flex: 1;
  height: 17px;
  background: linear-gradient(#f3f1ec, #fefefb);
`;

const ScrollButton = styled.button`
  display: grid;
  place-items: center;
  width: 17px;
  height: 16px;
  border: 1px solid #98b1e4;
  border-radius: 2px;
  background: linear-gradient(#d2dffc, #b9cbf8);
`;

const TrackFill = styled.div`
  flex: 808 1 0;
`;

const Thumb = styled.div`
  flex: 232 1 0;
  display: grid;
  place-items: center;
  height: 15px;
  margin-right: 2px;
  border: 1px solid #98b1e4;
  border-radius: 2px;
  background: linear-gradient(#cddcfd, #b7cbfa);
`;

const ViewTools = styled.div`
  display: flex;
  align-items: center;
  width: 170px;
  padding-left: 3px;
`;

const ViewButton = styled.button`
  display: grid;
  place-items: center;
  width: 17px;
  height: 16px;
  font: bold 12px/14px "Liberation Serif", serif;
`;

/* ---------- drawing bar ---------- */
const LineBar = styled.div`
  display: flex;
  align-items: center;
  height: 29px;
  padding-left: 3px;
  border-top: 1px solid #fff;
  border-bottom: 1px solid ${shade};
`;

const Swatches = styled.div`
  display: grid;
  grid-template-columns: repeat(8, 10px);
  grid-auto-rows: 10px;
`;

const Swatch = styled.button<{ $c: string }>`
  width: 10px;
  height: 10px;
  border: 1px solid ${shade};
  background: ${(p) => p.$c};
`;

const Symbol = styled.input`
  width: 63px;
  height: 20px;
  padding-left: 2px;
  border: 1px solid;
  border-color: #808080 #fff #fff #808080;
  box-shadow: inset 1px 1px 0 ${shade};
  font: 12px/14px ${ui};
`;

const TradeButton = styled.button`
  width: 63px;
  height: 20px;
  border: 1px solid #c9c7ba;
  border-radius: 3px;
  background: #f5f4ea;
  color: #a1a192;
`;

/* ---------- status bar ---------- */
const StatusBar = styled.footer`
  display: flex;
  align-items: center;
  height: 18px;
  padding-left: 1px;
  border-top: 1px solid ${shade};
  background: linear-gradient(#d8d5c4, ${face} 4px, ${face});
`;

const StatusCell = styled.span<{ $w: number; $mid?: boolean }>`
  display: flex;
  align-items: center;
  justify-content: ${(p) => (p.$mid ? 'center' : 'flex-start')};
  width: ${(p) => p.$w}px;
  height: 14px;
  padding-left: 4px;
  border-right: 1px solid #c5c2b2;
  white-space: nowrap;
`;

/* ---------- task bar ---------- */
const TaskBar = styled.div`
  display: flex;
  height: 30px;
  background: linear-gradient(#1f50b8 0, #3f8cf3 2px, #2663e0 6px, #245ddb 24px, #1941a5);
  color: #fff;
`;

const Start = styled.button`
  display: flex;
  align-items: center;
  gap: 4px;
  width: 110px;
  padding-left: 10px;
  margin-right: 9px;
  border-radius: 0 10px 12px 0;
  background: linear-gradient(#2c7a2c 0, #5eb55e 2px, #3c9a3c 8px, #3c963c 22px, #2a6a2a);
  box-shadow: inset -4px 0 6px #286428;
  color: #fff;
  font: italic bold 16px/24px ${ui};
  text-shadow: 1px 1px 1px #1c3c1c;
`;

const Task = styled.button<{ $active?: boolean }>`
  display: flex;
  align-items: center;
  gap: 5px;
  flex: 107 1 0;
  min-width: 0;
  max-width: 180px;
  height: 24px;
  margin: 3px 2px 0 0;
  padding: 0 8px;
  border-radius: 2px;
  color: #fff;
  white-space: nowrap;
  background: ${(p) => (p.$active ? 'linear-gradient(#1843a0, #1e52b7)' : 'linear-gradient(#5d9bf8, #3c81f3 4px, #3a7cf0 20px, #2c62cc)')};
  i { font-style: normal; font-weight: bold; color: #ffd080; }
  span { flex: 1; text-align: left; }
`;

const Tray = styled.div`
  display: flex;
  align-items: center;
  gap: 2px;
  flex: none;
  width: 153px;
  padding-right: 13px;
  background: linear-gradient(90deg, transparent 7px, rgba(0, 0, 0, 0) 7px), linear-gradient(#0c59b9 0, #18b9f8 2px, #1196ec 6px, #0f8eea 24px, #0d6fc0);
  time { flex: 1; text-align: right; }
`;

const Lang = styled.span`
  width: 28px;
  flex: none;
  padding-left: 8px;
  line-height: 30px;
`;

const Explorer = () => (
  <svg width="16" height="16" viewBox="0 0 16 16" aria-hidden="true">
    <path d="M13.500 11.500A5.500 5.500 0 1114 8.500H5" fill="none" stroke="#1c7fd8" strokeWidth="3" />
    <path d="M4 6.500a4.500 4.500 0 017-1.500" fill="none" stroke="#8fd0ff" />
    <path d="M1.500 15C-1 11 8 1 14.500 1.500c1.500.5.5 3-.5 4" fill="none" stroke="#e8a820" strokeWidth="1.500" />
  </svg>
);

const Flag = () => (
  <svg width="20" height="20" viewBox="0 0 20 20" aria-hidden="true">
    <path d="M4 3c2-1.500 4-1.500 6 0L8.500 9.500c-2-1.400-4-1.400-6 0z" fill="#f0562a" />
    <path d="M11 3.500c2 1.300 4.500 1.300 7 0l-1.700 6.500c-2.200 1.300-4.600 1.300-6.800 0z" fill="#8cc83c" />
    <path d="M2.200 10.500c2-1.500 4-1.500 6 0l-1.500 6.500c-2-1.400-4-1.400-6 0z" fill="#5a9cf0" />
    <path d="M9.200 11c2 1.300 4.500 1.300 7 0l-1.700 6.500c-2.200 1.300-4.600 1.300-6.800 0z" fill="#fcd030" />
  </svg>
);

const taskIcons: Record<string, React.ReactNode> = {
  note: <svg width="15" height="15"><rect width="15" height="15" fill="#111" /><rect x="1" y="1" width="13" height="13" fill="#ffe818" /><path d="M3 12L5 6l3 2 4-4-2 5-4 1z" fill="#222" /></svg>,
  ie: <Explorer />,
  folder: <svg width="16" height="14"><path d="M1 2h5l2 2h7v9H1z" fill="#f0c850" stroke="#b08020" /><path d="M1 6h14v7H1z" fill="#fce890" /></svg>,
  quote: <svg width="15" height="15" shapeRendering="crispEdges"><path d="M0 0h2v13h13v2H0zM3 1h3v11H3zM7 1h3v11H7zM11 1h3v11h-3z" fill="#000" /><path d="M4.500 3v8M8.500 3v8M12.500 3v8" stroke="#c02070" strokeDasharray="2 1" /></svg>,
  calc: <svg width="14" height="16"><rect x="2" width="10" height="16" rx="1" fill="#e8f0fc" stroke="#5878a8" /><path d="M4 2h6v3H4z" fill="#68a0e0" /><path d="M4 8h7M4 10.500h7M4 13h7" stroke="#5878a8" strokeDasharray="2 1" strokeWidth="1.500" /></svg>,
  globe: <svg width="16" height="16"><circle cx="8" cy="8" r="7" fill="#203c78" stroke="#8098c0" /><path d="M3 11c0-5 4-7 9-6-2 0-3 3-3 5 1-1 3-1 4 0-3 3-7 4-10 1z" fill="#c8d4e8" /></svg>,
  down: <svg width="15" height="15"><rect x="3" y="0" width="9" height="12" rx="3" fill="#181818" /><path d="M6 2h3v3h1v4H5V5h1z" fill="#e8d860" /><path d="M0 12h15v3H0z" fill="#181818" /><path d="M1 13h12" stroke="#aaa" /></svg>,
  bug: <Sprite rows={art.bug} />,
  paint: <svg width="14" height="16"><path d="M2 7h9l-1 9H4z" fill="#c8dce8" stroke="#607890" /><path d="M4 8L1 1" stroke="#d03020" strokeWidth="2" /><path d="M6 8V0" stroke="#f0c020" strokeWidth="2" /><path d="M8 8l4-7" stroke="#30a040" strokeWidth="2" /></svg>,
};

const tasks: { icon: string; text: string; count?: number; active?: boolean }[] = [
  { icon: 'note', text: 'Post-it® S...' },
  { icon: 'ie', text: 'Intern...', count: 4 },
  { icon: 'folder', text: 'Explora...', count: 2 },
  { icon: 'quote', text: 'QuoteRea...' },
  { icon: 'calc', text: 'Calculadora' },
  { icon: 'globe', text: 'Gobulling P...' },
  { icon: 'down', text: 'The DownL...' },
  { icon: 'bug', text: 'MetaStock ...', active: true },
  { icon: 'paint', text: 'Sem título ...' },
];

const swatchColors = ['#000', '#00f', '#0ff', '#0f0', '#f0f', '#f00', '#ff0', '#fff', '#000080', '#008080', '#008000', '#800080', '#800000', '#808000', '#808080', '#c0c0c0'];

const Stroke = ({ d, size = 16 }: { d: string; size?: number }) => (
  <svg width={size} height={size} viewBox="0 0 16 16" aria-hidden="true"><path d={d} fill="none" stroke="#000" /></svg>
);

const Tool = ({ name, icon }: { name: string; icon: React.ReactNode }) => <ToolButton aria-label={name}>{icon}</ToolButton>;

const Crosshair = () => (
  <svg width="15" height="15" aria-hidden="true"><circle cx="7.500" cy="7.500" r="5" fill="none" stroke="#000" /><path d="M7.500 0v6M7.500 9v6M0 7.500h6M9 7.500h6" stroke="#000080" /></svg>
);

const ChartSearch = () => (
  <svg width="16" height="15" aria-hidden="true">
    <path d="M0.500 1.500h11v11h-11z" fill="#fff" stroke="#808080" />
    <path d="M3 12V8M5 12v-2M8 12v-2" stroke="#000" />
    <circle cx="7" cy="5" r="4" fill="#c0ffff" stroke="#000" strokeWidth="1.500" />
    <path d="M5 5h4M7 3v5" stroke="#008080" />
    <path d="M10 8l5 6" stroke="#000" strokeWidth="2.500" />
  </svg>
);

export default function App() {
  return (
    <>
      <Global />
      <Window>
        <TitleBar>
          <TitleHalf>
            <Sprite rows={art.bug} />
            <span>MetaStock Professional - [CIMPOR]</span>
          </TitleHalf>
          <TitleHalf>
            <Price>5.68000</Price>
            <Period>Daily</Period>
            <CaptionButton aria-label="Minimize" $tone="min"><svg width="14" height="14"><path d="M2 11h7" stroke="#fff" strokeWidth="3" /></svg></CaptionButton>
            <CaptionButton aria-label="Restore" $tone="max"><svg width="14" height="14"><path d="M4.500 5V2.500h8v6H10M1.500 5.500h8v6h-8zM1.500 6.500h8" fill="none" stroke="#fff" strokeWidth="1.500" /></svg></CaptionButton>
            <CaptionButton aria-label="Close" $tone="close"><svg width="14" height="14"><path d="M2 2l10 10M12 2L2 12" stroke="#fff" strokeWidth="2.500" /></svg></CaptionButton>
          </TitleHalf>
        </TitleBar>

        <MenuBar>
          <Sprite rows={art.doc} />
          {['File', 'Edit', 'View', 'Insert', 'Format', 'Tools', 'Window', 'Help'].map((m) => <MenuItem key={m}>{m}</MenuItem>)}
          <Spacer />
          <ChildButton aria-label="Minimize chart"><svg width="10" height="10"><path d="M1 8.500h6" stroke="#6a685c" strokeWidth="2" /></svg></ChildButton>
          <ChildButton aria-label="Restore chart"><svg width="10" height="10"><path d="M3 3V1.500h6V6H7.500M0.500 4.500h6V9h-6z" fill="none" stroke="#6a685c" strokeWidth="1.500" /></svg></ChildButton>
          <ChildButton aria-label="Close chart"><svg width="10" height="10"><path d="M1.500 1.500l7 7M8.500 1.500l-7 7" stroke="#6a685c" strokeWidth="2" /></svg></ChildButton>
        </MenuBar>

        <ToolBar>
          <Grip />
          <Tool name="New" icon={<Sprite rows={art.fresh} />} />
          <Tool name="Open" icon={<Sprite rows={art.open} />} />
          <Tool name="Save" icon={<Sprite rows={art.save} />} />
          <Divider />
          <Tool name="Print" icon={<Sprite rows={art.print} />} />
          <Tool name="Print preview" icon={<Sprite rows={art.preview} />} />
          <Divider />
          <Tool name="Cut" icon={<Sprite rows={art.cut} />} />
          <Tool name="Copy" icon={<Sprite rows={art.copy} />} />
          <Tool name="Paste" icon={<Sprite rows={art.paste} />} />
          <Divider />
          <Tool name="Undo" icon={<Sprite rows={art.undo} />} />
          <Divider />
          <Tool name="Choose cursor" icon={<Crosshair />} />
          <Tool name="Zoom chart" icon={<ChartSearch />} />
          <Divider />
          <ComboBox label="Indicator" width={175} value="Stochastic Oscillator" icon={<Sprite rows={art.hist} />} />
          <Divider />
          <Tool name="Security" icon={<Sprite rows={art.lock} />} />
          <Tool name="Expert advisor" icon={<Sprite rows={art.man} />} />
          <Tool name="Indicator builder" icon={<FuncMark>f<small>(x)</small></FuncMark>} />
          <Tool name="System tester" icon={<Sprite rows={art.scope} />} />
          <Tool name="Option scope" icon={<Dollar>$</Dollar>} />
          <Tool name="Explorer" icon={<Sprite rows={art.bino} />} />
          <Tool name="Community" icon={<Sprite rows={art.people} />} />
          <Divider />
          <Tool name="Context help" icon={<Sprite rows={art.help} />} />
          <BandEnd />
          <Grip />
          <Tool name="Cascade" icon={<Sprite rows={art.tile} />} />
          <Tool name="Columns" icon={<Sprite rows={art.cols} />} />
          <Tool name="Rows" icon={<Sprite rows={art.rows} />} />
          <Tool name="Tile" icon={<Sprite rows={art.quad} />} />
          <Tool name="Layout options" icon={<Sprite rows={art.quadGear} />} />
          <BandEnd />
        </ToolBar>

        <Work>
          <SideBar>
            <SideGrip />
            <SideButton $state="on" aria-label="Pointer"><Sprite rows={art.arrow} /></SideButton>
            <SideButton aria-label="Crosshair"><Stroke d="M8.500 2v13M2 8.500h13" /></SideButton>
            <SideLine />
            <SideButton aria-label="Trendline"><Stroke d="M3 3l11 11" /></SideButton>
            <SideButton aria-label="Horizontal line"><Stroke d="M1 8.500h15" /></SideButton>
            <SideButton aria-label="Vertical line"><Stroke d="M8.500 1v14" /></SideButton>
            <SideButton aria-label="Speed lines"><Stroke d="M3 14L13 4M2 3l12 12M9.500 1.500v4.500h4M5.500 8.500H2.500v2h3v2.500H2" /></SideButton>
            <SideLine $wide />
            <SideGrip />
            <SideButton $state="hot" aria-label="Scroll"><svg width="14" height="10"><path d="M5 0v10L0 5zM9 0v10l5-5z" fill="#4d6185" /></svg></SideButton>
            <SideLine />
            <SideButton aria-label="Text">abc</SideButton>
            <SideButton aria-label="Table"><Sprite rows={art.table} /></SideButton>
            <SideLine />
            <SideButton aria-label="Ellipse"><svg width="15" height="10"><ellipse cx="7.500" cy="5" rx="6.500" ry="4.500" fill="none" stroke="#000" /></svg></SideButton>
            <SideButton aria-label="Rectangle"><svg width="13" height="9"><path d="M0.500 0.500h12v8h-12z" fill="none" stroke="#000" /></svg></SideButton>
            <SideButton aria-label="Triangle"><svg width="13" height="8"><path d="M1 7.500h11L6.500 1z" fill="none" stroke="#000" /></svg></SideButton>
            <SideLine $wide />
          </SideBar>

          <Charts>
            <Panel>
              <Head name="CIMPOR" value="5.83500, 5.85000, 5.66500, 5.68000, -0.26500" tone="#000" />
              <Row>
                <Plot top={95} height={377} label="CIMPOR daily price"><PriceMarks /></Plot>
                <Axis top={95} height={377} labels={priceLabels} minor={[102, 109, 117, ...priceLabels.map(([y]) => y + 7.7).filter((y) => y < 472)]} />
              </Row>
            </Panel>

            <Panel>
              <Head name="MACD" value="0.00476" />
              <Row>
                <Plot top={495} height={122} label="MACD">
                  <Level y={541} />
                  <Line points={macdSignal} color="#ff0000" dash="3 3" />
                  <Line points={macd} color="#ff0000" />
                </Plot>
                <Axis top={495} height={122} labels={macdLabels} minor={series(496, 616, 3.22)} />
              </Row>
            </Panel>

            <Panel>
              <Head name="Relative Strength Index" value="35.8487" />
              <Row>
                <Plot top={640} height={63} label="Relative Strength Index">
                  {[643, 665, 688].map((y) => <Level key={y} y={y} />)}
                  {trend(32, 687, 388, 653)}
                  <Line points={rsi} color="#ff0000" />
                </Plot>
                <Axis top={640} height={63} labels={[[666, '50']]} minor={[643, 654, 677, 688, 700]} />
              </Row>
            </Panel>

            <Panel>
              <Head name="Stochastic Oscillator" value="31.6456" />
              <Row>
                <Plot top={726} height={33} label="Stochastic Oscillator">
                  {[734, 751].map((y) => <Level key={y} y={y} />)}
                  <Line points={average(stoch)} color="#000000" dash="3 3" />
                  <Line points={stoch} color="#ff0000" />
                </Plot>
                <Axis top={726} height={33} labels={[[743, '50']]} minor={series(728, 758, 3)} />
              </Row>
            </Panel>

            <Panel>
              <Head name="Momentum" value="93.3443" />
              <Row>
                <Plot top={782} height={48} label="Momentum">
                  <Level y={804} />
                  {trend(32, 822, 318, 800)}
                  <Line points={momentum} color="#ff0000" />
                </Plot>
                <Axis top={782} height={48} labels={[[789, '110'], [804, '100'], [819, '90']]} minor={[785, 797, 812, 827]} />
              </Row>
              <Zones>
                <span>File zone</span>
                <span>Net zone</span>
                <ZoneGraph width="90" height="31" shapeRendering="crispEdges">
                  <path d="M1 31V27h1v-7h1v-3h1v4h1v5h1v2h1v2h3v-2h1v2h3v-3h1v3h4v-2h1v2h5v-2h1v2h5v-1h1v1h6v-2h1v2h3v1z" fill="#58ff58" />
                  <path d="M84 30h2M88 30h2" stroke="#f44" />
                  <path d="M45 0v31" stroke="#b8b4a8" strokeWidth="2" />
                </ZoneGraph>
              </Zones>
              <PostIt>
                <PostTab />
                <PostStar width="37" height="22"><path d="M1 8l7-5 6 2 5-4 4 4 10-2 2 7-1 8-8 3-6-3-10 2-6-3 1-5z" fill="#ffe800" stroke="#605800" /></PostStar>
                <PostName>Post-it</PostName>
                <PostNotes>Notes</PostNotes>
              </PostIt>
            </Panel>

            <BarePanel $ruled>
              <Row>
                <Plot top={834} height={61} label="Volume">
                  {volume.map((h, i) => <rect key={i} x={barX(i)} y={892 - h} width={1} height={h} fill="#0000ff" />)}
                  <Line points={volumeMA} color="#ff0000" />
                </Plot>
                <Axis top={834} height={61} labels={[[852, '5000']]} minor={[844, 860, 867, 875, 883]} />
              </Row>
              <Multiplier>x100</Multiplier>
            </BarePanel>

            <BarePanel>
              <Row>
                <DateScale>
                  <Dates marks={[...weeks, ...monthTicks]} />
                  <Dates marks={months} />
                </DateScale>
                <ScaleGap />
              </Row>
            </BarePanel>

            <ScrollRow>
              <Track>
                <ScrollButton aria-label="Scroll left"><svg width="6" height="9"><path d="M5 0.500L1 4.500l4 4" fill="none" stroke="#4d6185" strokeWidth="2" /></svg></ScrollButton>
                <TrackFill />
                <Thumb><svg width="8" height="7" shapeRendering="crispEdges"><path d="M0.500 0v7M2.500 0v7M4.500 0v7M6.500 0v7" stroke="#8caaf0" /></svg></Thumb>
                <ScrollButton aria-label="Scroll right"><svg width="6" height="9"><path d="M1 0.500l4 4-4 4" fill="none" stroke="#4d6185" strokeWidth="2" /></svg></ScrollButton>
              </Track>
              <ViewTools>
                <ViewButton aria-label="Refresh"><Stroke size={12} d="M4 9V4h6M7 1l3 3-3 3M12 7v5H6M9 9l-3 3 3 3" /></ViewButton>
                <ViewButton aria-label="Daily">D</ViewButton>
                <Divider $gap={6} />
                <ViewButton aria-label="Fit height"><svg width="7" height="9"><path d="M3.500 0L7 3.500H4.500v2H7L3.500 9 0 5.500h2.500v-2H0z" /></svg></ViewButton>
                <ViewButton aria-label="Pan"><svg width="9" height="9"><path d="M4.500 0v9M0 4.500h9M3 1.500h3M3 7.500h3M1.500 3v3M7.500 3v3" stroke="#000" /></svg></ViewButton>
                <ViewButton aria-label="Zoom out"><svg width="10" height="10"><circle cx="5" cy="5" r="4" fill="none" stroke="#000" /><path d="M3 5h4" stroke="#000" strokeWidth="2" /></svg></ViewButton>
                <ViewButton aria-label="Zoom in"><svg width="10" height="10"><circle cx="5" cy="5" r="4" fill="none" stroke="#000" /><path d="M3 5h4M5 3v4" stroke="#000" strokeWidth="2" /></svg></ViewButton>
                <Divider $gap={6} />
                <ViewButton aria-label="Previous"><svg width="5" height="10"><path d="M5 0v10L0 5z" /></svg></ViewButton>
                <ViewButton aria-label="Next"><svg width="5" height="10"><path d="M0 0v10l5-5z" /></svg></ViewButton>
                <ViewButton aria-label="Properties"><svg width="8" height="9" shapeRendering="crispEdges"><path d="M0.500 0.500h7v8h-7zM1 2.500h6M2 4.500h4M2 6.500h4" fill="none" stroke="#000" /></svg></ViewButton>
              </ViewTools>
            </ScrollRow>
          </Charts>
        </Work>

        <LineBar>
          <Grip />
          <ComboBox label="Line style" width={131} line={1} />
          <Divider />
          <ComboBox label="Line weight" width={101} line={4} />
          <BandEnd />
          <Grip />
          <Swatches>
            {swatchColors.map((c) => <Swatch key={c} $c={c} aria-label={`Colour ${c}`} />)}
          </Swatches>
          <ToolButton $w={14} aria-label="More colours"><svg width="6" height="3"><path d="M0 0h6L3 3z" /></svg></ToolButton>
          <BandEnd />
          <Grip />
          <Tool name="Web page one" icon={<Explorer />} />
          <Tool name="Web page two" icon={<Explorer />} />
          <Tool name="Chart one" icon={<Sprite rows={art.one} />} />
          <Tool name="Chart two" icon={<Sprite rows={art.two} />} />
          <Tool name="Layout one" icon={<Sprite rows={art.windows} />} />
          <Tool name="Layout two" icon={<Sprite rows={art.windows} />} />
          <Tool name="Layout three" icon={<Sprite rows={art.windows} />} />
          <BandEnd />
          <Grip />
          <Symbol aria-label="Symbol" defaultValue="CIMPOR" />
          <Divider />
          <ComboBox label="Price" width={81} />
          <Divider />
          <ComboBox label="Vendor" width={151} value="<No Vendor>" />
          <Divider />
          <TradeButton disabled>Trade</TradeButton>
          <BandEnd />
        </LineBar>

        <StatusBar>
          <span>For Help, press F1</span>
          <Spacer />
          <StatusCell $w={68}>09-04-2008</StatusCell>
          <StatusCell $w={57} />
          <StatusCell $w={73}>-0.22185</StatusCell>
          <StatusCell $w={41}>20:51</StatusCell>
          <StatusCell $w={24} $mid><Dollar>$</Dollar></StatusCell>
          <StatusCell $w={31}>NUM</StatusCell>
        </StatusBar>

        <TaskBar>
          <Start><Flag />Iniciar</Start>
          {tasks.map((t) => (
            <Task key={t.icon} $active={t.active}>
              {taskIcons[t.icon]}
              {t.count && <i>{t.count}</i>}
              <span>{t.text}</span>
              {t.count && <svg width="5" height="3"><path d="M0 0h5L2.500 3z" fill="#fff" /></svg>}
            </Task>
          ))}
          <Lang>PT</Lang>
          <Tray>
            <svg width="17" height="18"><circle cx="8" cy="9" r="8" fill="#3a86ec" stroke="#b8d8fc" /><path d="M10 5L6 9l4 4" fill="none" stroke="#fff" strokeWidth="2" /></svg>
            <svg width="16" height="16"><circle cx="8" cy="8" r="7.500" fill="#c01010" /><path d="M4 3c2 7 5 9 9 9M8 2c0 5 2 7 6 7" fill="none" stroke="#300" strokeWidth="1.500" /></svg>
            <svg width="16" height="16"><circle cx="8" cy="8" r="6" fill="none" stroke="#90b8f0" strokeWidth="2" strokeDasharray="9 3" /><path d="M5 10l3-6 3 6z" fill="#f07070" /></svg>
            <svg width="15" height="16"><path d="M7.500 0l6.500 3c0 6-2 10-6.500 13C3 13 1 9 1 3z" fill="#f8d820" stroke="#806000" /><path d="M7.500 4v5M7.500 11v2" stroke="#000" strokeWidth="2" /></svg>
            <svg width="16" height="15"><path d="M5 1h10v9H5z" fill="#e8f0fc" stroke="#3060a0" /><path d="M1 4h9v8H1z" fill="#f8e048" stroke="#907010" /><path d="M6 14h8v-2" stroke="#e8f0fc" fill="none" strokeWidth="2" /></svg>
            <svg width="16" height="16"><circle cx="8" cy="8" r="7.500" fill="#000" /><text x="8" y="10.500" textAnchor="middle" fill="#fff" fontSize="6" fontWeight="bold" fontFamily="Liberation Sans, sans-serif">DSL</text></svg>
            <time>20:51</time>
          </Tray>
        </TaskBar>
      </Window>
    </>
  );
}
